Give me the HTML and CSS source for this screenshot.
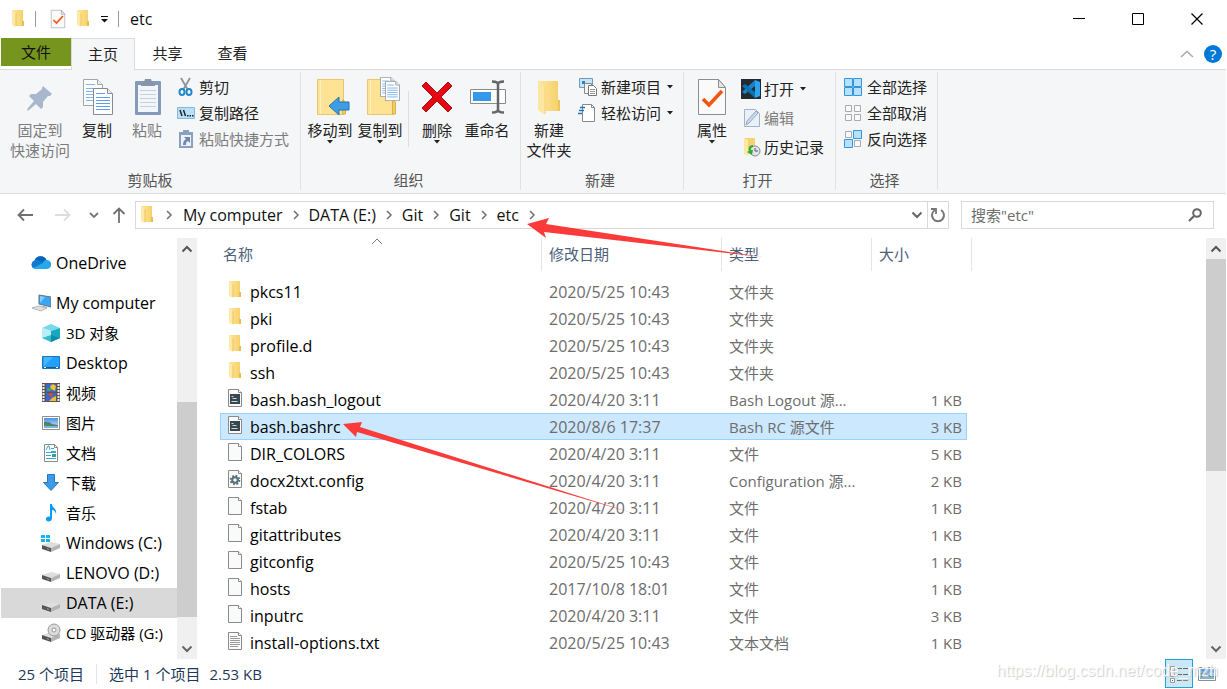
FILE: index.html
```html
<!DOCTYPE html>
<html lang="zh-CN">
<head>
<meta charset="utf-8">
<title>etc</title>
<link rel="stylesheet" href="styles.css">
</head>
<body>

<svg class="defs" width="0" height="0" aria-hidden="true">
<defs>
<linearGradient id="g-folder" x1="0" x2="1"><stop offset="0" stop-color="#ffe79e"/><stop offset="1" stop-color="#f5cf68"/></linearGradient>
<linearGradient id="g-sky" x1="0" x2="0" y1="0" y2="1"><stop offset="0" stop-color="#4a8fe0"/><stop offset="1" stop-color="#d5ecf9"/></linearGradient>
</defs>
<symbol id="folder" viewBox="0 0 16 20">
<path d="M2 1h11v11h1v5H4z" fill="url(#g-folder)"/><path d="M12 12h2v5h-2z" fill="#e9bd50"/>
<path d="M2 1l4 3v14l-4-2z" fill="#ffe9a9"/><path d="M6 4v13" stroke="#eec25a"/>
</symbol>
<symbol id="page" viewBox="0 0 16 20">
<path d="M1.500 1.500h10l3 3v14h-13z" fill="#f9fafa" stroke="#8a8a8a"/><path d="M11.500 1.500v3h3" fill="#fff" stroke="#8a8a8a"/>
</symbol>
<symbol id="script" viewBox="0 0 16 20">
<use href="#page"/><path d="M3 6h10v10H3z" fill="#36474f"/><path d="M4.500 8.500h2M5.500 10.500h4M4.500 13.500h6" fill="none" stroke="#cfd8dc"/>
</symbol>
<symbol id="config" viewBox="0 0 16 20">
<use href="#page"/><circle cx="8" cy="11" r="4.300" fill="none" stroke="#546e7a" stroke-width="2" stroke-dasharray="1.700 1.680"/><circle cx="8" cy="11" r="2.800" fill="none" stroke="#546e7a" stroke-width="2"/>
</symbol>
<symbol id="text" viewBox="0 0 16 20">
<use href="#page"/><path d="M3 5.500h7M3 7.500h10M3 9.500h10M3 11.500h10M3 13.500h10M3 15.500h8" stroke="#9a9a9a"/>
</symbol>
<symbol id="check-page" viewBox="0 0 32 40">
<path d="M2.500 2.500h20l7 8v27h-27z" fill="#fafafa" stroke="#8c8c8c"/><path d="M22.500 2.500v8h7z" fill="#e6e6e6" stroke="#8c8c8c"/>
<path d="M7 22l6 6 13-14" fill="none" stroke="#f0560f" stroke-width="3.500"/>
</symbol>
<symbol id="lined-page" viewBox="0 0 20 27">
<path d="M.5.5h14l5 5v21H.5z" fill="#fff" stroke="#858b94"/><path d="M14.500.5v5h5" fill="#e9edf2" stroke="#858b94"/>
<path d="M3 5.500h9M3 9.500h14M3 12.500h14M3 15.500h14M3 18.500h14M3 21.500h14" stroke="#5e9cec"/>
</symbol>
<symbol id="drive" viewBox="0 0 20 20">
<path d="M1 12l9-3 9 2-9 4z" fill="#dedede"/><path d="M1 12l9 3v4l-9-3z" fill="#555"/><path d="M10 15l9-4v4l-9 4z" fill="#b4b4b4"/><path d="M6 15l2 1v1l-2-1z" fill="#49d94f"/>
</symbol>
<symbol id="picture" viewBox="0 0 20 16">
<path d="M1.500 1.500h17v13h-17z" fill="#fff" stroke="#8f8f8f"/><path d="M3 3h14v10H3z" fill="url(#g-sky)"/><path d="M3 7q5-1 8 2l6 1v3H3z" fill="#4d8371"/><path d="M3 11h14v2H3z" fill="#7eb3d2"/>
</symbol>
<symbol id="chev" viewBox="0 0 8 10"><path d="M2 1l4 4-4 4" fill="none" stroke="#707070" stroke-width="1.500"/></symbol>
<symbol id="up" viewBox="0 0 12 8"><path d="M1.500 6.500L6 2l4.500 4.500" fill="none" stroke="#555" stroke-width="2"/></symbol>
<symbol id="down" viewBox="0 0 12 8"><path d="M1.500 1.500L6 6l4.500-4.500" fill="none" stroke="#666" stroke-width="2"/></symbol>
<symbol id="caret" viewBox="0 0 8 4"><path d="M1 0h6L4 3.500z" fill="#222"/></symbol>
</svg>

<div class="titlebar">
<svg class="quick" width="16" height="20"><use href="#folder"/></svg>
<span class="bar"></span>
<button class="quick check" aria-label="属性"><svg width="16" height="20"><use href="#check-page"/></svg></button>
<button class="quick" aria-label="新建文件夹"><svg width="16" height="20"><use href="#folder"/></svg></button>
<button class="quick" aria-label="自定义快速访问工具栏"><svg width="9" height="8"><path d="M1 1.500h7" stroke="#111"/><path d="M1 4h7L4.500 7.500z" fill="#111"/></svg></button>
<span class="bar"></span>
<span class="title latin">etc</span>
<div class="window-buttons">
<button aria-label="最小化"><svg width="12" height="12"><path d="M0 5.500h12" stroke="#000"/></svg></button>
<button aria-label="最大化"><svg width="12" height="12"><path d="M.5.5h11v11H.5z" fill="none" stroke="#000"/></svg></button>
<button aria-label="关闭"><svg width="12" height="12"><path d="M.5.5l11 11M11.500.5l-11 11" stroke="#000" stroke-width="1.200"/></svg></button>
</div>
</div>

<div class="tabs">
<button class="tab file">文件</button>
<button class="tab active">主页</button>
<button class="tab">共享</button>
<button class="tab">查看</button>
<div class="tab-tools">
<button aria-label="最小化功能区"><svg width="14" height="8"><path d="M1 7l6-5.500L13 7" fill="none" stroke="#a8a8a8" stroke-width="1.500"/></svg></button>
<button class="help">?</button>
</div>
</div>

<div class="ribbon">
<div class="group clipboard">
<div class="group-body">
<button class="big pin" disabled><svg width="40" height="40"><path d="M23 9l9 8-2 2h-2l-5 6v5l-2 2-5-5-7 6-2 1 1-3 6-7-5-5 2-2h5l6-5v-1z" fill="#a9b7ce"/></svg>固定到<br>快速访问</button>
<button class="big"><svg width="40" height="40"><svg x="6" y="2" width="20" height="27" opacity=".75"><use href="#lined-page"/></svg><svg x="16" y="11" width="20" height="27"><use href="#lined-page"/></svg></svg>复制</button>
<button class="big" disabled><svg width="40" height="40"><rect x="8" y="4" width="26" height="34" rx="1" fill="#8599ba"/><path d="M11 8h20v27H11z" fill="#f2f6fa"/><path d="M13 13.500h16M13 17.500h16M13 21.500h16M13 25.500h16M13 29.500h16" stroke="#c6d1df"/><path d="M14 5h3l1-3h6l1 3h3v4H14z" fill="#8795ac"/></svg>粘贴</button>
<div class="small-list">
<button class="small"><svg width="20" height="20"><path d="M5 1l7 12M14 1L7 13" stroke="#8d9399" stroke-width="1.800"/><g fill="none" stroke="#2287c8" stroke-width="2"><ellipse cx="6" cy="15" rx="2.500" ry="3"/><ellipse cx="13" cy="15" rx="2.500" ry="3"/></g></svg>剪切</button>
<button class="small"><svg width="20" height="20"><path d="M1.500 4.500h17v11h-17z" fill="#b9e0fa" stroke="#83b9de"/><path d="M4 7l2 6M7.500 7l2 6" stroke="#222" stroke-width="1.500"/><path d="M11 12h1.500v1.500H11zM13.500 12H15v1.500h-1.500zM16 12h1.500v1.500H16z" fill="#222"/></svg>复制路径</button>
<button class="small" disabled><svg width="20" height="20"><path d="M3 3h14v16H3z" fill="#8ba0c0"/><path d="M5 6h10v11H5z" fill="#edf3f8"/><path d="M7 1h6v4H7z" fill="#8ba0c0"/><path d="M8 8h6v6l-2-2c-2 1-2 2-2 4H7c0-3 1-5 3-6z" fill="#7087a9"/></svg>粘贴快捷方式</button>
</div>
</div>
<div class="group-title">剪贴板</div>
</div>

<div class="group organize">
<div class="group-body">
<button class="big"><svg width="40" height="40"><path d="M7.500 2.500h26v35h-26z" fill="#fee394" stroke="#e9c66a"/><path d="M10.500 3v34" stroke="#fff0be"/><path d="M32.500 23v14h3V25z" fill="#f2cd6b" stroke="#dcae43"/><path d="M19 29l10-9v5h10v8H29v5z" fill="#3d9de5" stroke="#2472b0"/></svg>移动到<svg class="caret" width="8" height="4"><use href="#caret"/></svg></button>
<button class="big"><svg width="40" height="40"><path d="M7.500 2.500h26v35h-26z" fill="#fee394" stroke="#e9c66a"/><path d="M10.500 3v34" stroke="#fff0be"/><path d="M32.500 23v14h3V25z" fill="#f2cd6b" stroke="#dcae43"/><svg x="20" y="0" width="15" height="20"><use href="#lined-page"/></svg><svg x="25" y="4" width="15" height="20"><use href="#lined-page"/></svg></svg>复制到<svg class="caret" width="8" height="4"><use href="#caret"/></svg></button>
<span class="divider"></span>
<button class="big"><svg width="40" height="40"><path d="M9 5l11 11L31 5l4 4-11 11 11 11-4 4-11-11L9 35l-4-4 11-11L5 9z" fill="#e50914" stroke="#a80d16"/></svg>删除<svg class="caret" width="8" height="4"><use href="#caret"/></svg></button>
<button class="big"><svg width="40" height="40"><path d="M3.500 12.500h35v14h-35z" fill="#fff" stroke="#8b8b8b"/><path d="M6 15h18v9H6z" fill="#3598e8"/><path d="M25 4.500q6 0 6 3 0-3 6-3M31 7v26M25 35.500q6 0 6-3 0 3 6 3" fill="none" stroke="#666" stroke-width="2.500"/></svg>重命名</button>
</div>
<div class="group-title">组织</div>
</div>

<div class="group new">
<div class="group-body">
<button class="big"><svg width="40" height="40"><path d="M9 4h20v19h2v11H12z" fill="url(#g-folder)"/><path d="M29 23h2v11h-2z" fill="#edc45a"/><path d="M9 4l7 5v29l-7-5z" fill="#ffe6a0"/><path d="M16 9v28" stroke="#f5d376"/></svg>新建<br>文件夹</button>
<div class="small-list">
<button class="small"><svg width="20" height="20"><path d="M1.500 1.500h13v9h-13z" fill="#c5e5f8" stroke="#6e9ab8"/><path d="M4 4h3v3H4z" fill="#2d82bc"/><path d="M6.500 6.500h7v10h-7z" fill="#f3f3f3" stroke="#888"/><path d="M10.500 8.500h5l3 3v7h-8z" fill="#fff" stroke="#777"/><path d="M12 12.500h5M12 14.500h5M12 16.500h5" stroke="#999"/></svg>新建项目<svg class="caret" width="8" height="4"><use href="#caret"/></svg></button>
<button class="small"><svg width="20" height="20"><path d="M4.500 1.500h9l3 3v14h-12z" fill="#fff" stroke="#888"/><path d="M13.500 1.500v3h3" fill="none" stroke="#888"/><path d="M2 4.500h5M1 7.500h5M0 10.500h4" stroke="#2675b7" stroke-width="1.500"/></svg>轻松访问<svg class="caret" width="8" height="4"><use href="#caret"/></svg></button>
</div>
</div>
<div class="group-title">新建</div>
</div>

<div class="group open">
<div class="group-body">
<button class="big"><svg width="32" height="40"><use href="#check-page"/></svg>属性<svg class="caret" width="8" height="4"><use href="#caret"/></svg></button>
<div class="small-list">
<button class="small"><svg width="20" height="20"><path d="M0 0h20v20H0z" fill="#252a30"/><path d="M14 1l5 2v14l-5 2z" fill="#2aa4ed"/><path d="M14 1v6L4 15l-3-2z" fill="#1684c8"/><path d="M1 7l3-2 10 8v6z" fill="#0b72b5"/></svg>打开<svg class="caret" width="8" height="4"><use href="#caret"/></svg></button>
<button class="small" disabled><svg width="20" height="20"><path d="M3.500 1.500h11l4 4v13h-15z" fill="#e9f0f8" stroke="#a0b2ce"/><path d="M5 17l1-4L15 3l2 2-9 10z" fill="#cbd9e9" stroke="#91a7c6"/></svg>编辑</button>
<button class="small"><svg width="20" height="20"><path d="M3 1h11v16H3z" fill="#f6d372"/><path d="M3 1l4 2v16l-4-2z" fill="#ffe89f"/><circle cx="14" cy="14" r="5" fill="#e2e5e7" stroke="#848b90"/><path d="M14 11v3h3" fill="none" stroke="#555"/><path d="M12 8c-4 0-5 3-4 6l-2 1 5 3 1-5-2 0c-1-2 0-3 2-3z" fill="#2eac3e"/></svg>历史记录</button>
</div>
</div>
<div class="group-title">打开</div>
</div>

<div class="group select">
<div class="group-body">
<div class="small-list">
<button class="small"><svg width="20" height="20" fill="#b8e1ff" stroke="#3296df"><path d="M.5 1.500h8v8h-8zM9.500 1.500h8v8h-8zM.5 10.500h8v8h-8zM9.500 10.500h8v8h-8z"/></svg>全部选择</button>
<button class="small"><svg width="20" height="20" fill="#fafafa" stroke="#aaa"><path d="M1.500 2.500h6v6h-6zM10.500 2.500h6v6h-6zM1.500 11.500h6v6h-6zM10.500 11.500h6v6h-6z"/></svg>全部取消</button>
<button class="small"><svg width="20" height="20"><path d="M1.500 2.500h6v6h-6zM10.500 11.500h6v6h-6z" fill="#fafafa" stroke="#aaa"/><path d="M9.500 1.500h8v8h-8zM.5 10.500h8v8h-8z" fill="#b8e1ff" stroke="#3296df"/></svg>反向选择</button>
</div>
</div>
<div class="group-title">选择</div>
</div>
</div>

<div class="navbar">
<div class="history">
<button aria-label="后退"><svg width="16" height="14"><path d="M16 7H2M7 1.500L1.500 7 7 12.500" fill="none" stroke="#707070" stroke-width="1.800"/></svg></button>
<button aria-label="前进"><svg width="16" height="14"><path d="M0 7h14M9 1.500L14.500 7 9 12.500" fill="none" stroke="#ddd" stroke-width="1.800"/></svg></button>
<button class="recent" aria-label="最近的位置"><svg width="10" height="7"><path d="M1 1l4 4 4-4" fill="none" stroke="#777" stroke-width="1.800"/></svg></button>
<button class="parent" aria-label="上移"><svg width="14" height="16"><path d="M7 16V2M1.500 7L7 1.500 12.500 7" fill="none" stroke="#707070" stroke-width="1.800"/></svg></button>
</div>
<div class="address latin">
<svg width="16" height="20"><use href="#folder"/></svg>
<svg class="sep" width="8" height="10"><use href="#chev"/></svg>
<a href="#">My computer</a><svg class="sep" width="8" height="10"><use href="#chev"/></svg>
<a href="#">DATA (E:)</a><svg class="sep" width="8" height="10"><use href="#chev"/></svg>
<a href="#">Git</a><svg class="sep" width="8" height="10"><use href="#chev"/></svg>
<a href="#">Git</a><svg class="sep" width="8" height="10"><use href="#chev"/></svg>
<a href="#">etc</a><svg class="sep" width="8" height="10"><use href="#chev"/></svg>
<button class="drop" aria-label="以前的位置"><svg width="12" height="8"><use href="#down"/></svg></button>
<button class="refresh" aria-label="刷新"><svg width="16" height="16"><path d="M11 3a6 6 0 1 1-6 0" fill="none" stroke="#777" stroke-width="2"/><path d="M1 2h5v5" fill="none" stroke="#777" stroke-width="1.800"/></svg></button>
</div>
<div class="search">
<input type="text" aria-label="搜索" placeholder='搜索"etc"'>
<svg width="16" height="16"><circle cx="10" cy="6" r="3.800" fill="none" stroke="#666" stroke-width="2"/><path d="M7 9l-5 5" stroke="#666" stroke-width="2.200"/></svg>
</div>
</div>

<div class="main">
<div class="side">
<ul class="tree">
<li class="root"><a href="#" class="latin"><svg width="20" height="20"><path d="M4 16a4.500 4.500 0 0 1-.5-8.500 6.500 6.500 0 0 1 12-.5A4.500 4.500 0 0 1 16 16z" fill="#28a8ea"/><path d="M3.500 7.500a6.500 6.500 0 0 1 12-.5c-2 0-3 1-4 3L7 7.500z" fill="#0364b8"/><path d="M3.500 7.500H7l5 2.500-10 5a4.500 4.500 0 0 1 1.500-7.500z" fill="#0f78d4"/></svg>OneDrive</a></li>
<li class="root gap"><a href="#" class="latin"><svg width="20" height="20"><path d="M8 2l12 2v10L8 11z" fill="#39a5f4" stroke="#68737b"/><path d="M9 3l5 1-5 6z" fill="#82cdfb"/><path d="M12 13l4 1v2h-5z" fill="#a1a6aa"/><path d="M1 15l7-2 8 2-6 3z" fill="#dfe2e4" stroke="#b2b8bc"/></svg>My computer</a></li>
<li><a href="#"><svg width="20" height="20"><path d="M1 5l9-4 9 4-9 3z" fill="#74d9e8"/><path d="M1 5l9 3v11l-9-4z" fill="#b5eff4"/><path d="M10 8l9-3v10l-9 4z" fill="#18a8c4"/><path d="M1 15l9-3v7z" fill="#37bdcf"/><path d="M10 12l9 3-9 4z" fill="#0b8da9"/></svg>3D 对象</a></li>
<li><a href="#" class="latin"><svg width="20" height="20"><path d="M1.500 3.500h17v12h-17z" fill="#22a0fa" stroke="#1976bd"/><path d="M3 4h9L3 13z" fill="#48b5ff"/><path d="M2 14.500h16" stroke="#125b95"/><path d="M3 14h2v1H3zM15 14h2v1h-2z" fill="#fff"/></svg>Desktop</a></li>
<li><a href="#"><svg width="20" height="20"><path d="M1 0h18v19H1z" fill="#555"/><path d="M2.500 1v17M17.500 1v17" stroke="#eee" stroke-width="2" stroke-dasharray="2 1"/><path d="M5 1h10v8H5zM5 10h10v8H5z" fill="#3a66cd"/><path d="M9 3l3-2 3 2-1 5-4-2z" fill="#efc22f"/><path d="M6 5h4v3H6z" fill="#41a452"/><path d="M8 10h4l-1 4-3-1z" fill="#e53f3c"/><path d="M11 15l4-2v5H8z" fill="#f0bd2e"/></svg>视频</a></li>
<li><a href="#"><svg width="20" height="16"><use href="#picture"/></svg>图片</a></li>
<li><a href="#"><svg width="20" height="20"><path d="M3.500 1.500h10l3 3v14h-13z" fill="#fff" stroke="#8b8b8b"/><path d="M13.500 1.500v3h3" fill="none" stroke="#8b8b8b"/><path d="M5 7l2-4h1l1 4M10 5.500h3M10 8.500h5M5 9.500h10M5 12.500h5M5 15.500h10" fill="none" stroke="#36a6dd"/><path d="M11 11h4v3h-4z" fill="#37a27d"/></svg>文档</a></li>
<li><a href="#"><svg width="20" height="20"><path d="M6.500 1.500h7v8h4L10 17.500 2.500 9.500h4z" fill="#3c9ae6" stroke="#2678bb"/></svg>下载</a></li>
<li><a href="#"><svg width="20" height="20"><path d="M9 1h2c0 4 5 4 4 10-1-3-2-4-4-4v8c0 5-7 4-6 1 0-2 2-3 4-2z" fill="#0d9af2"/></svg>音乐</a></li>
<li><a href="#" class="latin"><svg width="20" height="20"><use href="#drive"/><path d="M0 2h4v3H0zM5 2h4v3H5zM0 6h4v3H0zM5 6h4v3H5z" fill="#16b4ef"/></svg>Windows (C:)</a></li>
<li><a href="#" class="latin"><svg width="20" height="20"><use href="#drive"/></svg>LENOVO (D:)</a></li>
<li class="current"><a href="#" class="latin"><svg width="20" height="20"><use href="#drive"/></svg>DATA (E:)</a></li>
<li><a href="#"><svg width="20" height="20"><use href="#drive"/><circle cx="13" cy="7" r="6" fill="#dcdcdc" stroke="#999"/><circle cx="13" cy="7" r="2" fill="#fff" stroke="#999"/></svg>CD 驱动器 (G:)</a></li>
</ul>
<div class="scroll">
<button aria-label="向上滚动"><svg width="12" height="8"><use href="#up"/></svg></button>
<div class="track low"><div class="thumb"></div></div>
<button aria-label="向下滚动"><svg width="12" height="8"><use href="#down"/></svg></button>
</div>
</div>

<div class="files">
<table>
<thead>
<tr>
<th class="name"><div>名称<svg class="sort" width="12" height="7"><path d="M1 6l5-5 5 5" fill="none" stroke="#777"/></svg></div></th>
<th class="date"><div>修改日期</div></th>
<th class="type"><div>类型</div></th>
<th class="size"><div>大小</div></th>
</tr>
</thead>
<tbody>
<tr><td><svg width="16" height="20"><use href="#folder"/></svg>pkcs11</td><td>2020/5/25 10:43</td><td class="cjk">文件夹</td><td></td></tr>
<tr><td><svg width="16" height="20"><use href="#folder"/></svg>pki</td><td>2020/5/25 10:43</td><td class="cjk">文件夹</td><td></td></tr>
<tr><td><svg width="16" height="20"><use href="#folder"/></svg>profile.d</td><td>2020/5/25 10:43</td><td class="cjk">文件夹</td><td></td></tr>
<tr><td><svg width="16" height="20"><use href="#folder"/></svg>ssh</td><td>2020/5/25 10:43</td><td class="cjk">文件夹</td><td></td></tr>
<tr><td><svg width="16" height="20"><use href="#script"/></svg>bash.bash_logout</td><td>2020/4/20 3:11</td><td class="cjk">Bash Logout 源...</td><td>1 KB</td></tr>
<tr class="selected"><td><svg width="16" height="20"><use href="#script"/></svg>bash.bashrc</td><td>2020/8/6 17:37</td><td class="cjk">Bash RC 源文件</td><td>3 KB</td></tr>
<tr><td><svg width="16" height="20"><use href="#page"/></svg>DIR_COLORS</td><td>2020/4/20 3:11</td><td class="cjk">文件</td><td>5 KB</td></tr>
<tr><td><svg width="16" height="20"><use href="#config"/></svg>docx2txt.config</td><td>2020/4/20 3:11</td><td class="cjk">Configuration 源...</td><td>2 KB</td></tr>
<tr><td><svg width="16" height="20"><use href="#page"/></svg>fstab</td><td>2020/4/20 3:11</td><td class="cjk">文件</td><td>1 KB</td></tr>
<tr><td><svg width="16" height="20"><use href="#page"/></svg>gitattributes</td><td>2020/4/20 3:11</td><td class="cjk">文件</td><td>1 KB</td></tr>
<tr><td><svg width="16" height="20"><use href="#page"/></svg>gitconfig</td><td>2020/5/25 10:43</td><td class="cjk">文件</td><td>1 KB</td></tr>
<tr><td><svg width="16" height="20"><use href="#page"/></svg>hosts</td><td>2017/10/8 18:01</td><td class="cjk">文件</td><td>1 KB</td></tr>
<tr><td><svg width="16" height="20"><use href="#page"/></svg>inputrc</td><td>2020/4/20 3:11</td><td class="cjk">文件</td><td>3 KB</td></tr>
<tr><td><svg width="16" height="20"><use href="#text"/></svg>install-options.txt</td><td>2020/5/25 10:43</td><td class="cjk">文本文档</td><td>1 KB</td></tr>
</tbody>
</table>
</div>
<div class="scroll">
<button aria-label="向上滚动"><svg width="12" height="8"><use href="#up"/></svg></button>
<div class="track"><div class="thumb"></div></div>
<button aria-label="向下滚动"><svg width="12" height="8"><use href="#down"/></svg></button>
</div>
</div>

<div class="status">
<span class="count">25 个项目</span>
<span>选中 1 个项目</span>
<span>2.53 KB</span>
<div class="views">
<button class="on" aria-label="详细信息"><svg width="20" height="20"><path d="M1.500 2.500h4v4h-4zM1.500 8.500h4v4h-4zM1.500 14.500h4v4h-4z" fill="#fff" stroke="#999"/><path d="M3 4h1v1H3z" fill="#28638f"/><path d="M3 10h1v1H3z" fill="#477b42"/><path d="M3 16h1v1H3z" fill="#c9411e"/><path d="M8 4.500h5M14 4.500h5M8 10.500h5M14 10.500h5M8 16.500h5M14 16.500h5" stroke="#666"/></svg></button>
<button aria-label="大缩略图"><svg width="20" height="16"><use href="#picture"/></svg></button>
</div>
</div>

<div class="watermark">https://blog.csdn.net/code_mzh</div>
<svg class="marks" width="1227" height="689" aria-hidden="true">
<path d="M527 224l22-6-3 6 216 33-218-25 2 6z" fill="#fb3b3a"/>
<path d="M343 424l19-2-2 5 272 86-275-81-1 5z" fill="#fb3b3a"/>
</svg>
</body>
</html>
```

FILE: styles.css
```css
/* Window */

* { box-sizing: border-box; }

body
{ margin: 0;
min-height: 100vh;
display: flex;
flex-direction: column;
position: relative;
overflow: hidden;
padding-right: 1px;
background: white;
color: #111;
font: 15px/20px "Open Sans", "Noto Sans CJK SC", sans-serif;
}

button
{ margin: 0;
padding: 0;
border: 0;
background: none;
color: inherit;
font: inherit;
display: flex;
align-items: center;
justify-content: center;
}

a
{ color: inherit;
text-decoration: none;
}

svg { flex: none; }
.defs { position: absolute; }
.latin { font-size: 16px; }

/* Title bar */

.titlebar
{ display: flex;
align-items: center;
height: 38px;
padding-left: 10px;
}

.quick { margin-right: 9px; }
.check { margin-left: 6px; }
.quick + .bar + .title { margin-left: 3px; }

.bar
{ width: 1px;
height: 16px;
margin-right: 8px;
background: #999;
}

.window-buttons
{ display: flex;
margin-left: auto;
}

.window-buttons button
{ width: 59px;
height: 38px;
}

/* Ribbon tabs */

.tabs
{ display: flex;
height: 32px;
padding-left: 1px;
border-bottom: 1px solid #dadbdc;
}

.tab
{ width: 65px;
height: 30px;
color: #222;
}

.tab.file
{ width: 70px;
height: 28px;
background: #76951f;
color: #111;
}

.tab.active
{ width: 64px;
height: 32px;
padding-bottom: 2px;
border: 1px solid #dadbdc;
border-bottom: 0;
background: #f5f6f7;
}

.tab-tools
{ display: flex;
align-items: center;
gap: 10px;
margin-left: auto;
padding-right: 4px;
}

.help
{ width: 18px;
height: 18px;
border-radius: 50%;
background: #0078d7;
color: white;
}

/* Ribbon */

.ribbon
{ display: flex;
height: 124px;
border-bottom: 1px solid #dadbdc;
background: #f5f6f7;
color: #222;
}

.group
{ display: flex;
flex-direction: column;
margin: 2px 0 3px;
border-right: 1px solid #e0e1e2;
}

.clipboard { width: 301px; }
.organize { width: 220px; }
.new { width: 163px; }
.open { width: 152px; }
.select { width: 102px; }

.group-body
{ display: flex;
align-items: flex-start;
flex: 1;
padding: 3px 0 0 3px;
}

.clipboard .group-body { padding-left: 8px; }
.organize .group-body { padding-left: 4px; }
.select .group-body { padding-left: 4px; }

.group-title
{ padding-right: 4px;
color: #555;
text-align: center;
}

.clipboard .group-title { padding-right: 0; }

.big
{ flex-direction: column;
width: 50px;
padding-top: 2px;
white-space: nowrap;
}

.big > svg:first-child { margin-bottom: 3px; }
.pin { width: 64px; }
.ribbon button:disabled { color: #7c7c7c; }

.small-list
{ margin-top: -1px;
margin-left: 4px;
}

.small
{ height: 26px;
gap: 3px;
white-space: nowrap;
}

.open .small { height: 29px; }
.small .caret { margin-left: 2px; }

.divider
{ width: 1px;
height: 56px;
margin: 16px 3px 0;
background: #dcddde;
}

/* Address bar */

.navbar
{ display: flex;
align-items: center;
height: 44px;
padding: 0 12px 2px 0;
}

.history
{ display: flex;
align-items: center;
width: 135px;
padding-left: 17px;
}

.history button { margin-right: 22px; }
.history .recent { margin: 0 13px 0 -4px; }
.history .parent { margin: 0; }

.address
{ display: flex;
align-items: center;
flex: 1;
height: 28px;
padding-left: 3px;
border: 1px solid #d9d9d9;
white-space: nowrap;
}

.sep { margin: 0 10px; }
.address a + .sep { margin: 0 9px; }

.drop
{ width: 20px;
margin-left: auto;
}

.refresh
{ width: 21px;
height: 26px;
border-left: 1px solid #d9d9d9;
}

.search
{ display: flex;
align-items: center;
width: 253px;
height: 28px;
margin-left: 12px;
padding: 0 10px 0 9px;
border: 1px solid #d9d9d9;
}

.search input
{ flex: 1;
min-width: 0;
padding: 0;
border: 0;
outline: 0;
font: inherit;
}

.search input::placeholder { color: #6d6d6d; }

/* Navigation pane */

.main
{ display: flex;
flex: 1;
}

.side
{ display: flex;
width: 197px;
}

.tree
{ flex: 1;
margin: 0;
padding: 10px 0 11px 1px;
list-style: none;
color: black;
}

.tree a
{ display: flex;
align-items: center;
gap: 5px;
height: 30px;
padding-left: 40px;
white-space: nowrap;
}

.tree .root a { padding-left: 30px; }
.tree .gap { margin-top: 10px; }
.tree .current { background: #d9d9d9; }

/* Scroll bars */

.scroll
{ display: flex;
flex-direction: column;
width: 20px;
background: #f0f0f0;
}

.scroll button { height: 21px; }
.track { flex: 1; }

.thumb
{ height: 56%;
background: #cdcdcd;
}

.track.low
{ display: flex;
flex-direction: column;
justify-content: flex-end;
padding-bottom: 21px;
}

.low .thumb { height: 60%; }

/* File list */

.files
{ flex: 1;
padding-left: 23px;
}

table
{ width: 747px;
table-layout: fixed;
border-collapse: collapse;
}

th
{ height: 40px;
padding: 0;
color: #4c607a;
font-weight: normal;
text-align: left;
vertical-align: top;
}

th div
{ position: relative;
height: 33px;
padding-left: 7px;
border-right: 1px solid #e5e5e5;
line-height: 32px;
}

.name { width: 322px; }
.name div { padding-left: 3px; }
.date { width: 180px; }
.type { width: 150px; }
.size div { margin-right: -5px; }

/* Sort mark lies over the heading */
.sort
{ position: absolute;
top: 0;
left: 47%;
}

td
{ height: 27px;
padding: 0 0 0 7px;
color: #6d6d6d;
font-size: 16px;
white-space: nowrap;
}

td:first-child
{ display: flex;
align-items: center;
gap: 7px;
color: black;
}

td:first-child svg { margin-bottom: 3px; }

td:last-child
{ padding-right: 5px;
text-align: right;
font-size: 15px;
}

td.cjk { font-size: 15px; }

.selected
{ background: #cce8ff;
outline: 1px solid #99d1ff;
outline-offset: -1px;
}

/* Status bar */

.status
{ display: flex;
align-items: center;
gap: 9px;
height: 30px;
padding: 0 0 1px 18px;
color: #1e395b;
}

.count
{ padding-right: 12px;
margin-right: 3px;
border-right: 1px solid #e5e5e5;
}

.views
{ display: flex;
margin-left: auto;
padding-right: 5px;
}

.views button
{ width: 28px;
height: 29px;
}

.views .on
{ border: 1px solid #26a0da;
background: #cbe8f6;
}

/* Overlays */

.watermark
{ position: absolute;
right: 9px;
bottom: 8px;
color: rgba(255,255,255,.85);
font: 16px/20px "Liberation Sans", sans-serif;
text-shadow: 1px 1px 1px #ccc;
pointer-events: none;
}

.marks
{ position: absolute;
top: 0;
left: 0;
pointer-events: none;
}
```
